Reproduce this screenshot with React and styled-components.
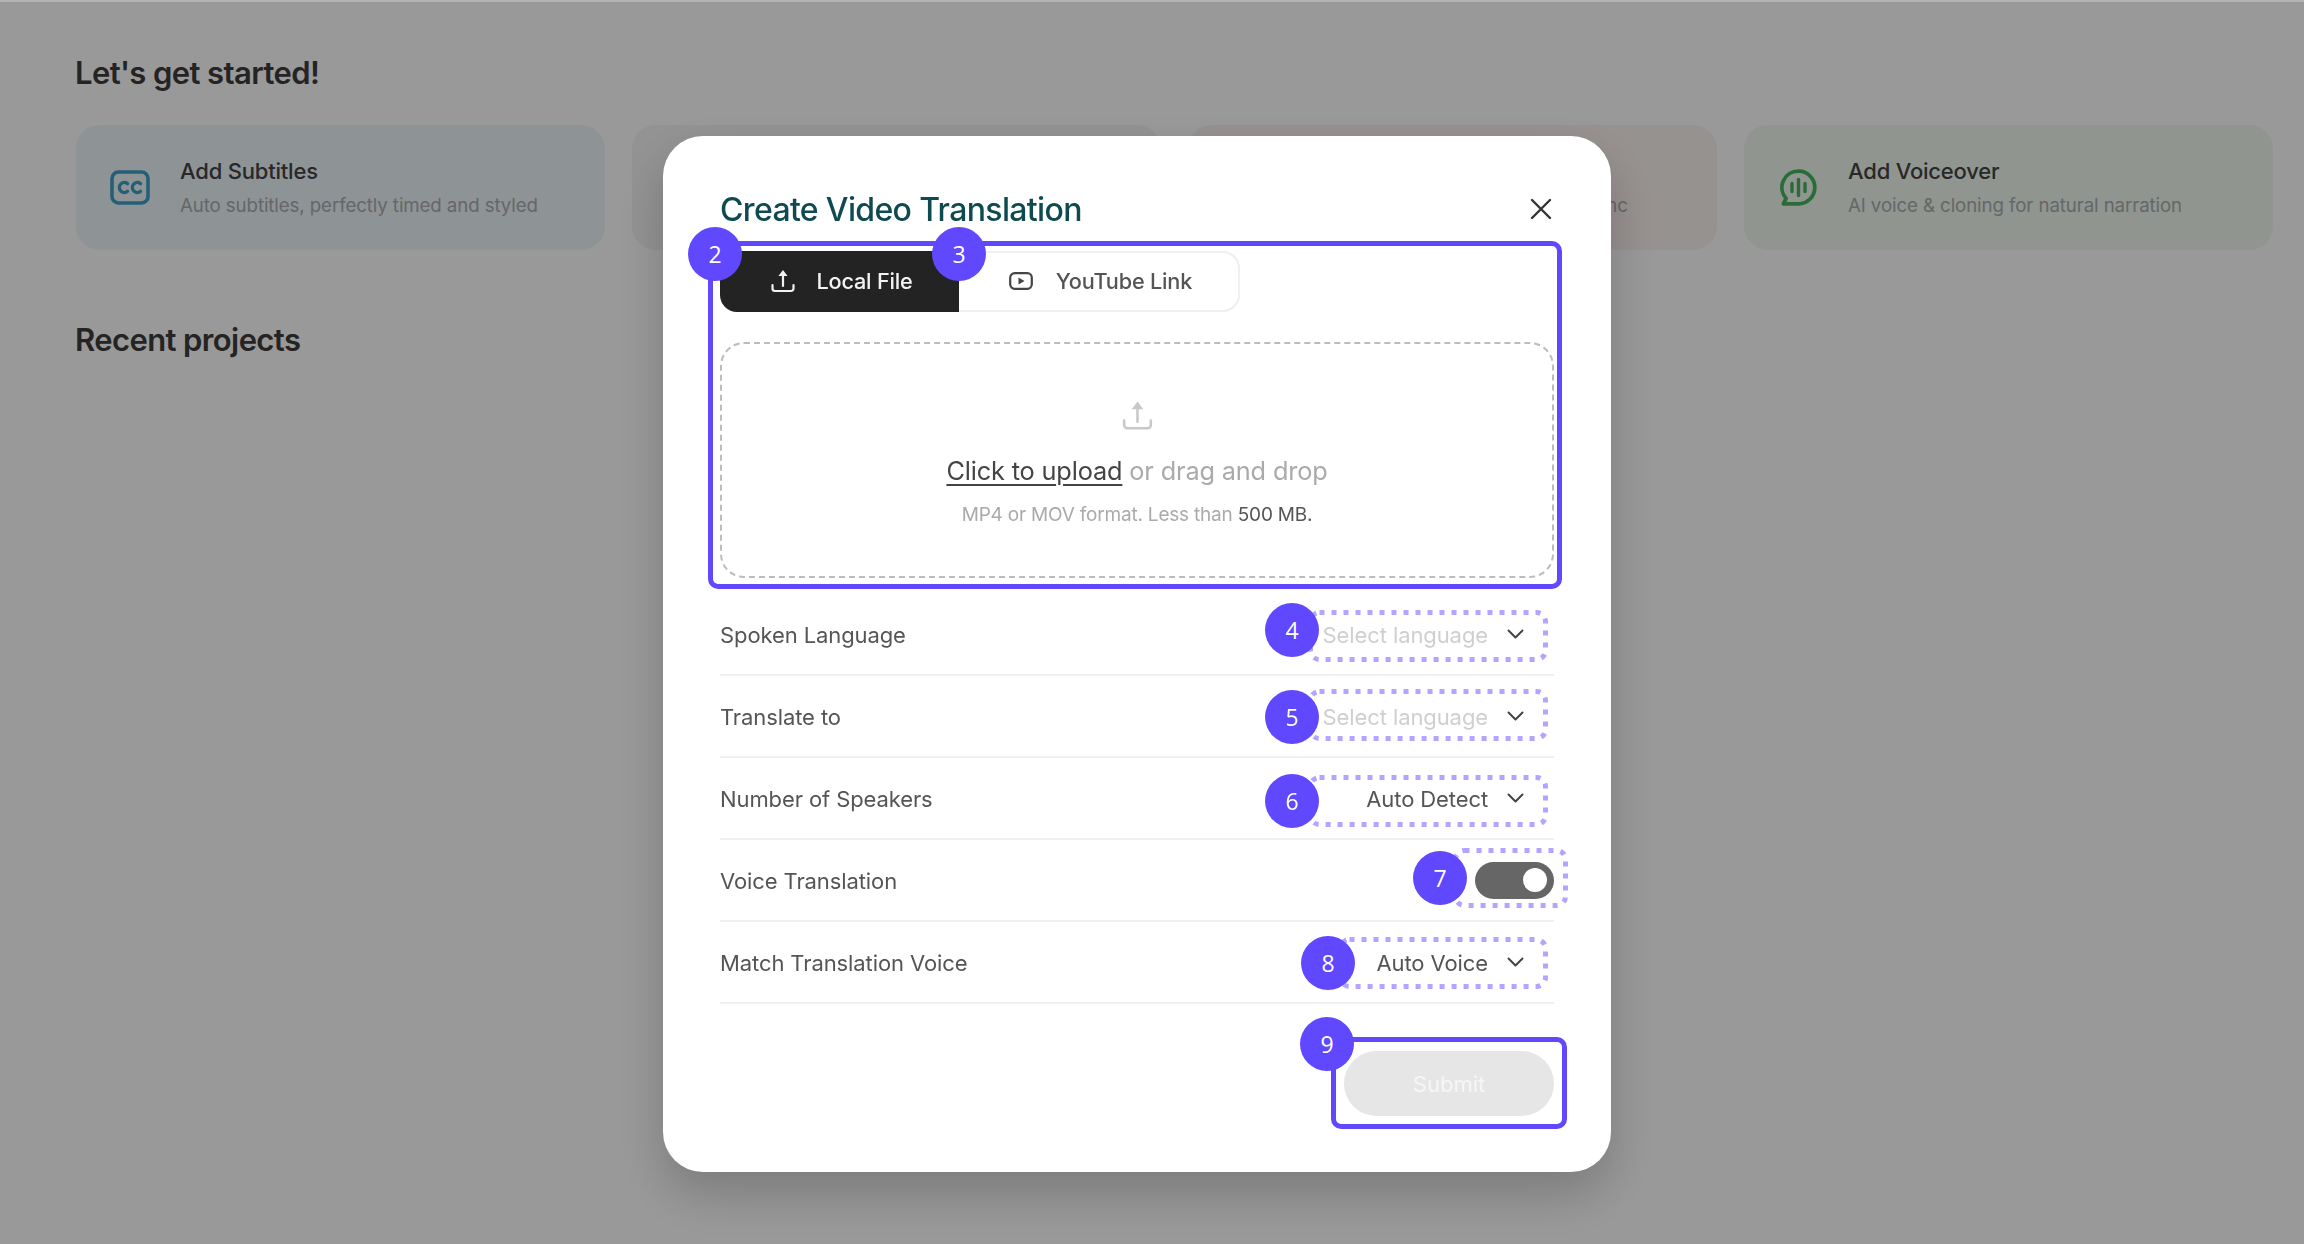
import React from 'react';
import styled, { createGlobalStyle } from 'styled-components';

const Global = createGlobalStyle`
  html, body { margin: 0; padding: 0; height: 100%; background: #fff; overflow: hidden; }
  * { box-sizing: border-box; }
  body { font-family: Inter, "Liberation Sans", sans-serif; }
`;

const Page = styled.div`
  height: 1244px;
  padding: 53px 30px 0 76px;
  background: #fff;
`;
const PageHeading = styled.h2`
  margin: 0 0 0 -1px;
  font-size: 31px;
  line-height: 40px;
  font-weight: 600;
  letter-spacing: -0.6px;
  color: #3c3c3c;
`;
const CardGrid = styled.div`
  display: grid;
  grid-template-columns: repeat(4, 529px);
  column-gap: 27px;
  margin: 32px 0 70px;
`;
const Card = styled.div`
  height: 125px;
  border-radius: 24px;
  background: ${p => p.$bg};
  display: flex;
  align-items: center;
  gap: 30px;
  padding-left: 34px;
`;
const CardIcon = styled.div`
  width: 40px;
  height: 40px;
  display: flex;
  align-items: center;
  justify-content: center;
  color: ${p => p.$color};
`;
const CardText = styled.div`
  display: flex;
  flex-direction: column;
  gap: 5px;
  padding-top: 1px;
`;
const CardTitle = styled.div`
  font-size: 22px;
  line-height: 30px;
  font-weight: 500;
  letter-spacing: -0.2px;
  color: #444;
`;
const CardSub = styled.div`
  font-size: 18.7px;
  line-height: 30px;
  letter-spacing: -0.1px;
  color: #a8acb0;
`;

const Overlay = styled.div`
  position: fixed;
  inset: 0;
  background: rgba(0, 0, 0, 0.4);
  border-top: 2px solid rgba(255, 255, 255, 0.25);
  display: flex;
  justify-content: center;
  align-items: flex-start;
  padding: 134px 30px 0 0;
`;
const Modal = styled.div`
  width: 948px;
  height: 1036px;
  background: #fff;
  border-radius: 40px;
  padding: 0 57px;
  box-shadow: 0 22px 50px rgba(0, 0, 0, 0.2);
  display: flex;
  flex-direction: column;
`;
const Header = styled.div`
  height: 115px;
  display: flex;
  align-items: center;
  justify-content: space-between;
  padding-top: 33px;
`;
const Title = styled.h1`
  margin: 0;
  font-size: 32px;
  line-height: 40px;
  font-weight: 500;
  letter-spacing: -0.65px;
  color: #0f4a50;
`;
const CloseIcon = styled.svg`
  width: 22px;
  height: 22px;
  display: block;
  margin: -2px 2px 0 0;
`;

const UploadSection = styled.section`
  position: relative;
  display: flex;
  flex-direction: column;
  gap: 30px;
`;
const Highlight = styled.div`
  position: absolute;
  top: ${p => p.$t}px;
  left: ${p => p.$l}px;
  right: ${p => p.$r}px;
  bottom: ${p => p.$b}px;
  border: 5.5px solid #6048ff;
  border-radius: 10px;
  pointer-events: none;
`;
const Badge = styled.div`
  position: absolute;
  top: ${p => p.$t}px;
  left: ${p => p.$l}px;
  width: 54px;
  height: 54px;
  border-radius: 50%;
  background: #6048ff;
  color: #fff;
  font-family: "Open Sans", sans-serif;
  font-size: 23px;
  display: flex;
  align-items: center;
  justify-content: center;
  z-index: 2;
`;
const Tabs = styled.div`
  width: 520px;
  height: 61px;
  display: flex;
  border: 2px solid #eeeef3;
  border-radius: 17px;
`;
const Tab = styled.div`
  width: ${p => p.$w}px;
  margin: ${p => (p.$active ? '-2px 0 -2px -2px' : '0')};
  padding: 0 0 1px 4px;
  display: flex;
  align-items: center;
  justify-content: center;
  gap: ${p => p.$gap}px;
  font-size: 21.7px;
  font-weight: 500;
  letter-spacing: -0.2px;
  background: ${p => (p.$active ? '#232323' : 'transparent')};
  color: ${p => (p.$active ? '#f2f2f2' : '#555')};
  border-radius: ${p => (p.$active ? '17px 0 0 17px' : '0')};
`;
const DropZone = styled.div`
  height: 236px;
  border: 2px dashed #bcbcbc;
  border-radius: 24px;
  display: flex;
  flex-direction: column;
  align-items: center;
  padding-top: 55px;
`;
const DropTitle = styled.div`
  margin-top: 21px;
  font-size: 25.3px;
  line-height: 36px;
  color: #aaa;
  letter-spacing: -0.15px;
`;
const DropLink = styled.span`
  color: #444;
  text-decoration: underline;
  text-underline-offset: 4px;
`;
const DropHint = styled.div`
  margin-top: 12px;
  font-size: 19px;
  line-height: 28px;
  color: #aaa;
  letter-spacing: -0.2px;
`;
const DropStrong = styled.span`
  color: #555;
`;

const Rows = styled.div`
  margin-top: 16px;
  display: flex;
  flex-direction: column;
`;
const Row = styled.div`
  height: 82px;
  border-bottom: 2px solid #f0f0f4;
  display: flex;
  align-items: center;
  justify-content: space-between;
`;
const RowLabel = styled.div`
  padding-top: 1px;
  font-size: 22px;
  letter-spacing: -0.1px;
  color: #555;
`;
const SelectField = styled.div`
  position: relative;
  width: ${p => p.$w}px;
  height: 52px;
  display: flex;
  align-items: center;
  justify-content: flex-end;
  gap: 19px;
  padding-right: 24px;
  margin-right: 6px;
`;
const SelectValue = styled.span`
  padding-top: 1px;
  font-size: 22px;
  letter-spacing: -0.1px;
  color: ${p => (p.$placeholder ? '#cfcfcf' : '#555')};
`;
const ChevronIcon = styled.svg`
  width: 17px;
  height: 10px;
  display: block;
  margin-top: -1px;
`;
const FrameSvg = styled.svg`
  position: absolute;
  right: ${p => p.$r}px;
  top: ${p => p.$t}px;
  pointer-events: none;
`;
const ToggleWrap = styled.div`
  position: relative;
  width: 79px;
  height: 37px;
`;
const ToggleTrack = styled.div`
  width: 100%;
  height: 100%;
  border-radius: 19px;
  background: #666;
  display: flex;
  align-items: center;
  justify-content: flex-end;
  padding-right: 7px;
`;
const ToggleKnob = styled.div`
  width: 24px;
  height: 24px;
  border-radius: 50%;
  background: #fff;
`;
const Footer = styled.div`
  margin-top: 47px;
  display: flex;
  justify-content: flex-end;
`;
const SubmitWrap = styled.div`
  position: relative;
  width: 210px;
  height: 65px;
`;
const SubmitButton = styled.div`
  width: 100%;
  height: 100%;
  border-radius: 33px;
  background: #e6e6e6;
  color: #f6f6f6;
  font-size: 22px;
  display: flex;
  align-items: center;
  justify-content: center;
`;

const UploadGlyph = ({ size = 26, color = 'currentColor', sw = 2.2 }) => (
  <svg width={size} height={size} viewBox="0 0 26 26" fill="none">
    <path d="M13 18V6" stroke={color} strokeWidth={sw} strokeLinecap="round" />
    <path d="M13 2l4.6 6H8.4z" fill={color} />
    <path d="M2.5 17v3.5A2.5 2.5 0 0 0 5 23h16a2.5 2.5 0 0 0 2.5-2.5V17" stroke={color} strokeWidth={sw} strokeLinecap="round" />
  </svg>
);
const VideoGlyph = () => (
  <svg width="24" height="20" viewBox="0 0 24 20" fill="none">
    <rect x="1.2" y="2.2" width="21.6" height="15.6" rx="4.5" stroke="#444" strokeWidth="2.2" />
    <path d="M9.5 6.5l6 3.5-6 3.5z" fill="#444" />
  </svg>
);
const CcGlyph = () => (
  <svg width="40" height="35" viewBox="0 0 40 35" fill="none">
    <rect x="2" y="2" width="36" height="31" rx="6.5" stroke="currentColor" strokeWidth="3.6" />
    <path d="M17.5 13.6a5 5 0 1 0 0 7.8M30.5 13.6a5 5 0 1 0 0 7.8" stroke="currentColor" strokeWidth="3.4" strokeLinecap="round" />
  </svg>
);
const VoiceGlyph = () => (
  <svg width="37" height="37" viewBox="0 0 37 37" fill="none">
    <path d="M18.5 2.2a16.3 16.3 0 1 1 0 32.6H3.4l2.7-5.4A16.3 16.3 0 0 1 18.5 2.2z" stroke="currentColor" strokeWidth="3.8" strokeLinejoin="round" />
    <path d="M12 14.5v8M18.5 10.5v16M25 14.5v8" stroke="currentColor" strokeWidth="3.4" strokeLinecap="round" />
  </svg>
);
const Chevron = () => (
  <ChevronIcon viewBox="0 0 17 10" fill="none">
    <path d="M1.5 1.5l7 7 7-7" stroke="#444" strokeWidth="2" strokeLinecap="round" strokeLinejoin="round" />
  </ChevronIcon>
);
const DottedFrame = ({ w, h, r, t }) => (
  <FrameSvg width={w} height={h} $r={r} $t={t}>
    <rect x="2.5" y="2.5" width={w - 5} height={h - 5} rx="9" fill="none" stroke="#b3a5ff" strokeWidth="5" strokeDasharray="5 7" />
  </FrameSvg>
);

const selects = [
  { label: 'Spoken Language', value: 'Select language', placeholder: true, badge: 4, ft: 2, bt: -5 },
  { label: 'Translate to', value: 'Select language', placeholder: true, badge: 5, ft: -1, bt: 0 },
  { label: 'Number of Speakers', value: 'Auto Detect', badge: 6, ft: 3, bt: 2 },
];

const Select = ({ value, placeholder, badge, w = 240, ft, bl = -43, bt }) => (
  <SelectField $w={w}>
    <DottedFrame w={w} h={52} r={0} t={ft} />
    <Badge $l={bl} $t={bt}>{badge}</Badge>
    <SelectValue $placeholder={placeholder}>{value}</SelectValue>
    <Chevron />
  </SelectField>
);

export default function App() {
  return (
    <>
      <Global />
      <Page>
        <PageHeading>Let's get started!</PageHeading>
        <CardGrid>
          <Card $bg="#edf5fa">
            <CardIcon $color="#3f9fc6"><CcGlyph /></CardIcon>
            <CardText>
              <CardTitle>Add Subtitles</CardTitle>
              <CardSub>Auto subtitles, perfectly timed and styled</CardSub>
            </CardText>
          </Card>
          <Card $bg="#f5f5f6" />
          <Card $bg="#fbf3f0">
            <CardIcon />
            <CardText>
              <CardTitle>Lip Sync</CardTitle>
              <CardSub>Natural lip movements, in perfect sync</CardSub>
            </CardText>
          </Card>
          <Card $bg="#f0f8f0">
            <CardIcon $color="#45b562"><VoiceGlyph /></CardIcon>
            <CardText>
              <CardTitle>Add Voiceover</CardTitle>
              <CardSub>AI voice &amp; cloning for natural narration</CardSub>
            </CardText>
          </Card>
        </CardGrid>
        <PageHeading>Recent projects</PageHeading>
      </Page>
      <Overlay>
        <Modal>
          <Header>
            <Title>Create Video Translation</Title>
            <CloseIcon viewBox="0 0 22 22" fill="none">
              <path d="M2 2l18 18M20 2L2 20" stroke="#333" strokeWidth="2.4" strokeLinecap="round" />
            </CloseIcon>
          </Header>
          <UploadSection>
            <Highlight $t={-10} $l={-12} $r={-8} $b={-11} />
            <Badge $l={-32} $t={-24}>2</Badge>
            <Badge $l={212} $t={-24}>3</Badge>
            <Tabs>
              <Tab $active $w={239} $gap={20}><UploadGlyph color="#f2f2f2" />Local File</Tab>
              <Tab $w={279} $gap={23}><VideoGlyph />YouTube Link</Tab>
            </Tabs>
            <DropZone>
              <UploadGlyph size={33} color="#c8c8c8" sw={2} />
              <DropTitle><DropLink>Click to upload</DropLink> or drag and drop</DropTitle>
              <DropHint>MP4 or MOV format. Less than <DropStrong>500 MB.</DropStrong></DropHint>
            </DropZone>
          </UploadSection>
          <Rows>
            {selects.map(s => (
              <Row key={s.badge}>
                <RowLabel>{s.label}</RowLabel>
                <Select {...s} />
              </Row>
            ))}
            <Row>
              <RowLabel>Voice Translation</RowLabel>
              <ToggleWrap>
                <DottedFrame w={115} h={60} r={-14} t={-14} />
                <Badge $l={-62} $t={-11}>7</Badge>
                <ToggleTrack><ToggleKnob /></ToggleTrack>
              </ToggleWrap>
            </Row>
            <Row>
              <RowLabel>Match Translation Voice</RowLabel>
              <Select value="Auto Voice" badge={8} w={210} ft={1} bl={-37} bt={0} />
            </Row>
          </Rows>
          <Footer>
            <SubmitWrap>
              <Highlight $t={-14} $l={-13} $r={-13} $b={-13} />
              <Badge $l={-44} $t={-34}>9</Badge>
              <SubmitButton>Submit</SubmitButton>
            </SubmitWrap>
          </Footer>
        </Modal>
      </Overlay>
    </>
  );
}
